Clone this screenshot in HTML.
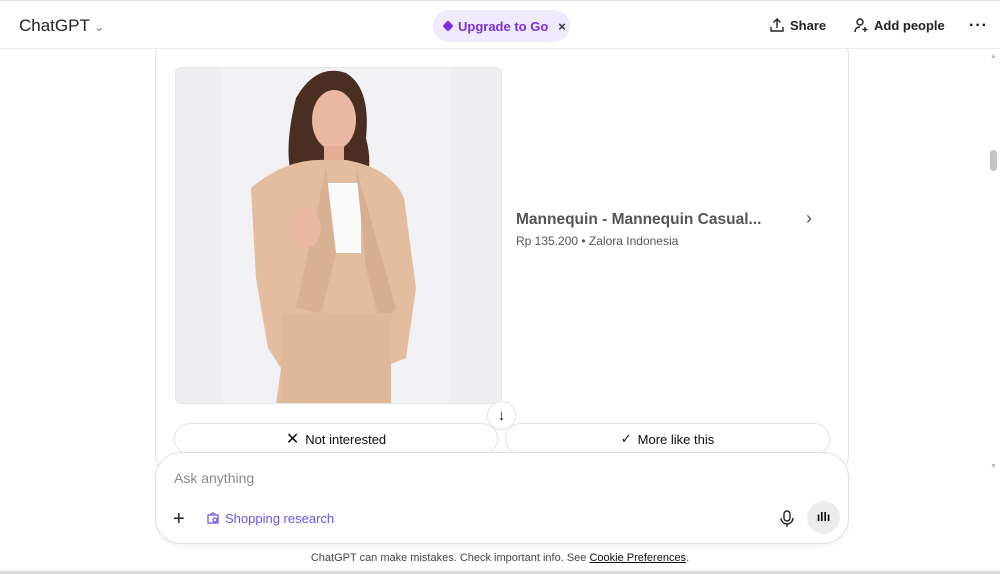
<!DOCTYPE html>
<html><head><meta charset="utf-8"><style>
*{box-sizing:border-box;margin:0;padding:0}
body{width:1000px;height:574px;background:#fff;font-family:"Liberation Sans",sans-serif;position:relative;overflow:hidden;color:#0d0d0d}
.top{position:absolute;left:0;top:0;width:1000px;height:49px;border-top:1px solid #e5e5e5;border-bottom:1px solid #ececec;background:#fff;z-index:2}
.abs{position:absolute}
.card{position:absolute;left:155px;top:30px;width:694px;height:450px;border:1px solid #e3e3e3;border-radius:26px}
.btn{position:absolute;top:423px;height:32px;border:1px solid #e3e3e3;border-radius:16px;font-size:13px;display:flex;align-items:center;justify-content:center;gap:6px;background:#fff}
.composer{position:absolute;left:155px;top:452px;width:694px;height:92px;border:1px solid #e0e0e0;border-radius:26px;background:#fff;box-shadow:0 2px 6px rgba(0,0,0,.06)}
</style></head><body>
<div class="card"></div>
<div class="top">
 <div class="abs" style="left:19px;top:15px;font-size:17px;color:#222">ChatGPT <span style="font-size:12px;color:#777">&#8964;</span></div>
 <div class="abs" style="left:433px;top:9px;width:137px;height:32px;border-radius:16px;background:#efeafd;color:#7b2fe0;font-size:13px;font-weight:bold;display:flex;align-items:center;padding-left:11px;gap:6px">
  <span style="display:inline-block;width:8px;height:8px;background:#7b2fe0;transform:rotate(45deg);border-radius:2px"></span>Upgrade to Go <span style="color:#333;margin-left:4px">×</span></div>
 <div class="abs" style="left:769px;top:16px;font-size:13px;font-weight:bold;color:#222">
  <svg width="16" height="16" viewBox="0 0 16 16" style="vertical-align:-3px;margin-right:5px" fill="none" stroke="#222" stroke-width="1.4"><path d="M8 11V2M4.5 5.5L8 2l3.5 3.5M2 10v4h12v-4"/></svg>Share</div>
 <div class="abs" style="left:853px;top:16px;font-size:13px;font-weight:bold;color:#222">
  <svg width="16" height="16" viewBox="0 0 16 16" style="vertical-align:-3px;margin-right:5px" fill="none" stroke="#222" stroke-width="1.4"><circle cx="7" cy="5" r="3"/><path d="M2 15c0-3 2-5 5-5M12 10v5M9.5 12.5h5"/></svg>Add people</div>
 <div class="abs" style="left:969px;top:18px;font-size:16px;font-weight:bold;letter-spacing:1px;line-height:14px">···</div>
</div>
<div class="abs" style="left:175px;top:67px;width:327px;height:337px;border-radius:6px;background:#efeef0;overflow:hidden;border:1px solid #e6e6e6">
 <svg width="327" height="337" viewBox="0 0 327 337">
  <rect x="45" y="0" width="230" height="337" fill="#f2f1f3"/>
  <path d="M120 30 Q140 -5 170 5 Q195 20 190 70 Q200 110 180 120 L120 120 Q105 90 120 30Z" fill="#4a2e22"/>
  <ellipse cx="158" cy="52" rx="22" ry="30" fill="#e9b9a4"/>
  <rect x="148" y="78" width="20" height="25" fill="#e3ad98"/>
  <path d="M75 120 Q110 90 150 92 L170 92 Q215 100 228 130 L240 220 L230 290 L205 300 L200 337 L100 337 L105 300 L92 280 L80 210 Z" fill="#e2bd9f"/>
  <rect x="150" y="115" width="35" height="70" fill="#fafafa"/>
  <path d="M150 100 L160 185 L145 245 L120 240 Z" fill="#d8b093"/>
  <path d="M180 100 L190 200 L205 260 L220 240 Z" fill="#d6ae91"/>
  <ellipse cx="130" cy="160" rx="15" ry="20" fill="#e8b9a3"/>
  <rect x="105" y="245" width="110" height="92" fill="#ddb89a"/>
 </svg>
</div>
<div class="abs" style="left:516px;top:211px;font-size:15.5px;font-weight:bold;color:#555">Mannequin - Mannequin Casual...</div>
<div class="abs" style="left:516px;top:234px;font-size:12px;color:#555">Rp 135.200 • Zalora Indonesia</div>
<div class="abs" style="left:806px;top:208px;font-size:18px;color:#555">&#8250;</div>
<div class="btn" style="left:174px;width:324px"><span style="font-size:16px">✕</span> Not interested</div>
<div class="btn" style="left:505px;width:325px"><span>✓</span> More like this</div>
<div class="abs" style="left:487px;top:401px;width:29px;height:29px;border-radius:50%;background:#fff;border:1px solid #e3e3e3;text-align:center;font-size:15px;line-height:27px">↓</div>
<div class="composer">
 <div class="abs" style="left:18px;top:17px;font-size:14px;color:#8a8a8a">Ask anything</div>
 <div class="abs" style="left:17px;top:56px;font-size:20px;color:#222;line-height:20px">+</div>
 <div class="abs" style="left:50px;top:58px;font-size:13px;color:#6a55f0">
  <svg width="14" height="14" viewBox="0 0 14 14" style="vertical-align:-2px;margin-right:5px" fill="none" stroke="#6a55f0" stroke-width="1.3"><path d="M2 4h10v8H2zM5 4a2 2 0 014 0"/><circle cx="9" cy="9" r="2"/></svg>Shopping research</div>
 <div class="abs" style="left:624px;top:57px">
  <svg width="14" height="18" viewBox="0 0 14 18" fill="none" stroke="#222" stroke-width="1.4"><rect x="4" y="1" width="6" height="10" rx="3"/><path d="M1 8a6 6 0 0012 0M7 14v3"/></svg></div>
 <div class="abs" style="left:651px;top:48px;width:33px;height:33px;border-radius:50%;background:#ececec;text-align:center;line-height:33px;font-size:12px;font-weight:bold">ıllı</div>
</div>
<div class="abs" style="left:0;top:552px;width:1000px;text-align:center;font-size:11px;color:#444">ChatGPT can make mistakes. Check important info. See <u style="color:#111">Cookie Preferences</u>.</div>
<div class="abs" style="left:0;top:571px;width:1000px;height:3px;background:#ddd"></div>
<div class="abs" style="left:990px;top:53px;font-size:7px;color:#bbb">▲</div>
<div class="abs" style="left:990px;top:150px;width:7px;height:21px;border-radius:4px;background:#c4c4c4"></div>
<div class="abs" style="left:990px;top:463px;font-size:7px;color:#bbb">▼</div>
</body></html>
